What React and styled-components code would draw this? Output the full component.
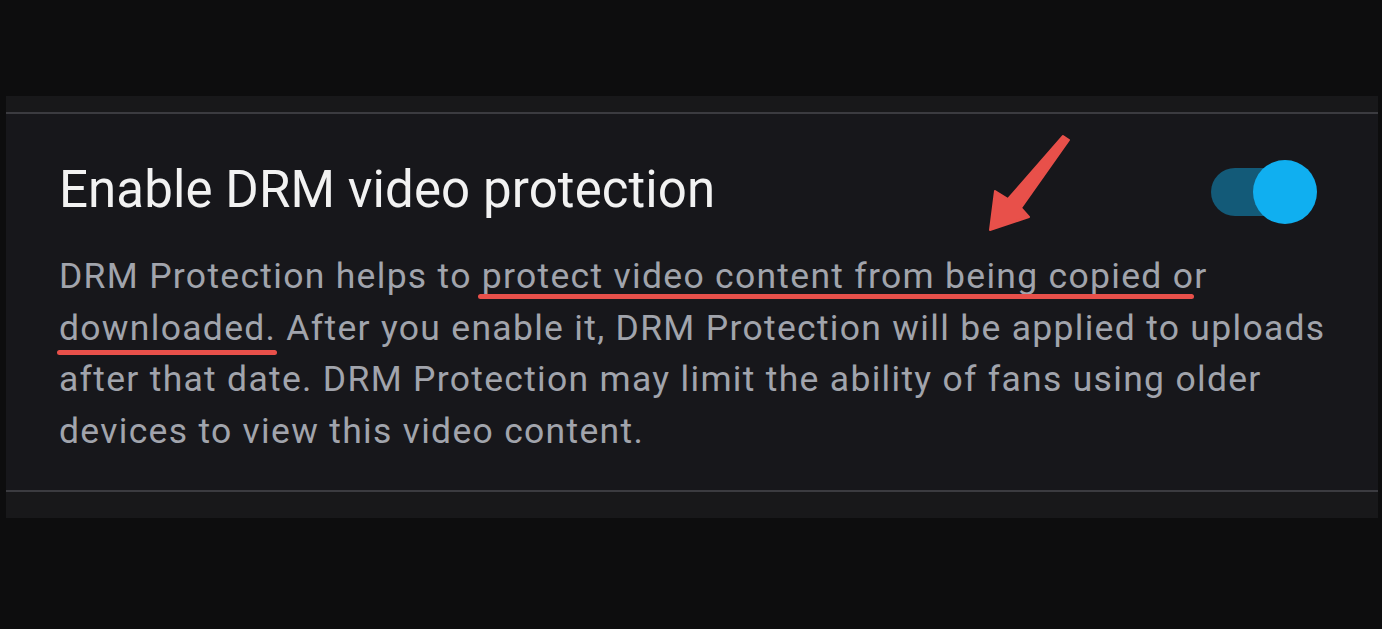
import React from "react";
import styled, { createGlobalStyle } from "styled-components";

const Global = createGlobalStyle`
  html, body { margin: 0; padding: 0; background: #0d0d0e; }
  body { font-family: Roboto, "Noto Sans", Arial, sans-serif; }
`;

const Page = styled.div`
  width: 1382px;
  height: 629px;
  background: #0d0d0e;
  padding: 96px 4px 0 6px;
  box-sizing: border-box;
`;

const Panel = styled.section`
  position: relative;
  height: 422px;
  background: #18181a;
  padding-top: 16px;
  box-sizing: border-box;
  display: flex;
  flex-direction: column;
`;

const Divider = styled.div`
  height: 2px;
  background: #3b3b40;
`;

const Body = styled.div`
  height: 376px;
  background: #17171b;
  padding: 44px 61px 0 53px;
  box-sizing: border-box;
`;

const TitleRow = styled.div`
  display: flex;
  align-items: center;
  justify-content: space-between;
  height: 64px;
`;

const Title = styled.h2`
  margin: 0;
  font-size: 51px;
  font-weight: 400;
  color: #f2f2f2;
  letter-spacing: 0.1px;
  line-height: 60px;
`;

const Switch = styled.div`
  position: relative;
  width: 106px;
  height: 64px;
  margin-top: 4px;
  display: flex;
  align-items: center;
`;

const Track = styled.div`
  width: 90px;
  height: 48px;
  border-radius: 24px;
  background: #135a78;
`;

const Knob = styled.div`
  position: absolute;
  right: 0;
  top: 0;
  width: 64px;
  height: 64px;
  border-radius: 50%;
  background: #10aff0;
`;

const Desc = styled.p`
  margin: 29px -20px 0 0;
  font-size: 35.5px;
  line-height: 51.7px;
  color: #a1a4ac;
  letter-spacing: 1.3px;
  white-space: nowrap;
`;

const Overlay = styled.svg`
  position: absolute;
  left: -6px;
  top: -96px;
  width: 1382px;
  height: 629px;
  pointer-events: none;
`;

export default function App() {
  return (
    <>
      <Global />
      <Page>
        <Panel>
          <Divider />
          <Body>
            <TitleRow>
              <Title>Enable DRM video protection</Title>
              <Switch>
                <Track />
                <Knob />
              </Switch>
            </TitleRow>
            <Desc>
              DRM Protection helps to protect video content from being copied or
              <br />
              downloaded. After you enable it, DRM Protection will be applied to uploads
              <br />
              after that date. DRM Protection may limit the ability of fans using older
              <br />
              devices to view this video content.
            </Desc>
          </Body>
          <Divider />
          <Overlay viewBox="0 0 1382 629">
            <rect x="478" y="294" width="716" height="5" rx="2.5" fill="#e8504a" />
            <rect x="57" y="350" width="220" height="5" rx="2.5" fill="#e8504a" />
            <polygon
              points="1063,136 1069,140 1021,208 1029,217 990,230 995,191 1008,199"
              fill="#e8504a"
              stroke="#e8504a"
              strokeWidth="2"
              strokeLinejoin="round"
            />
          </Overlay>
        </Panel>
      </Page>
    </>
  );
}
